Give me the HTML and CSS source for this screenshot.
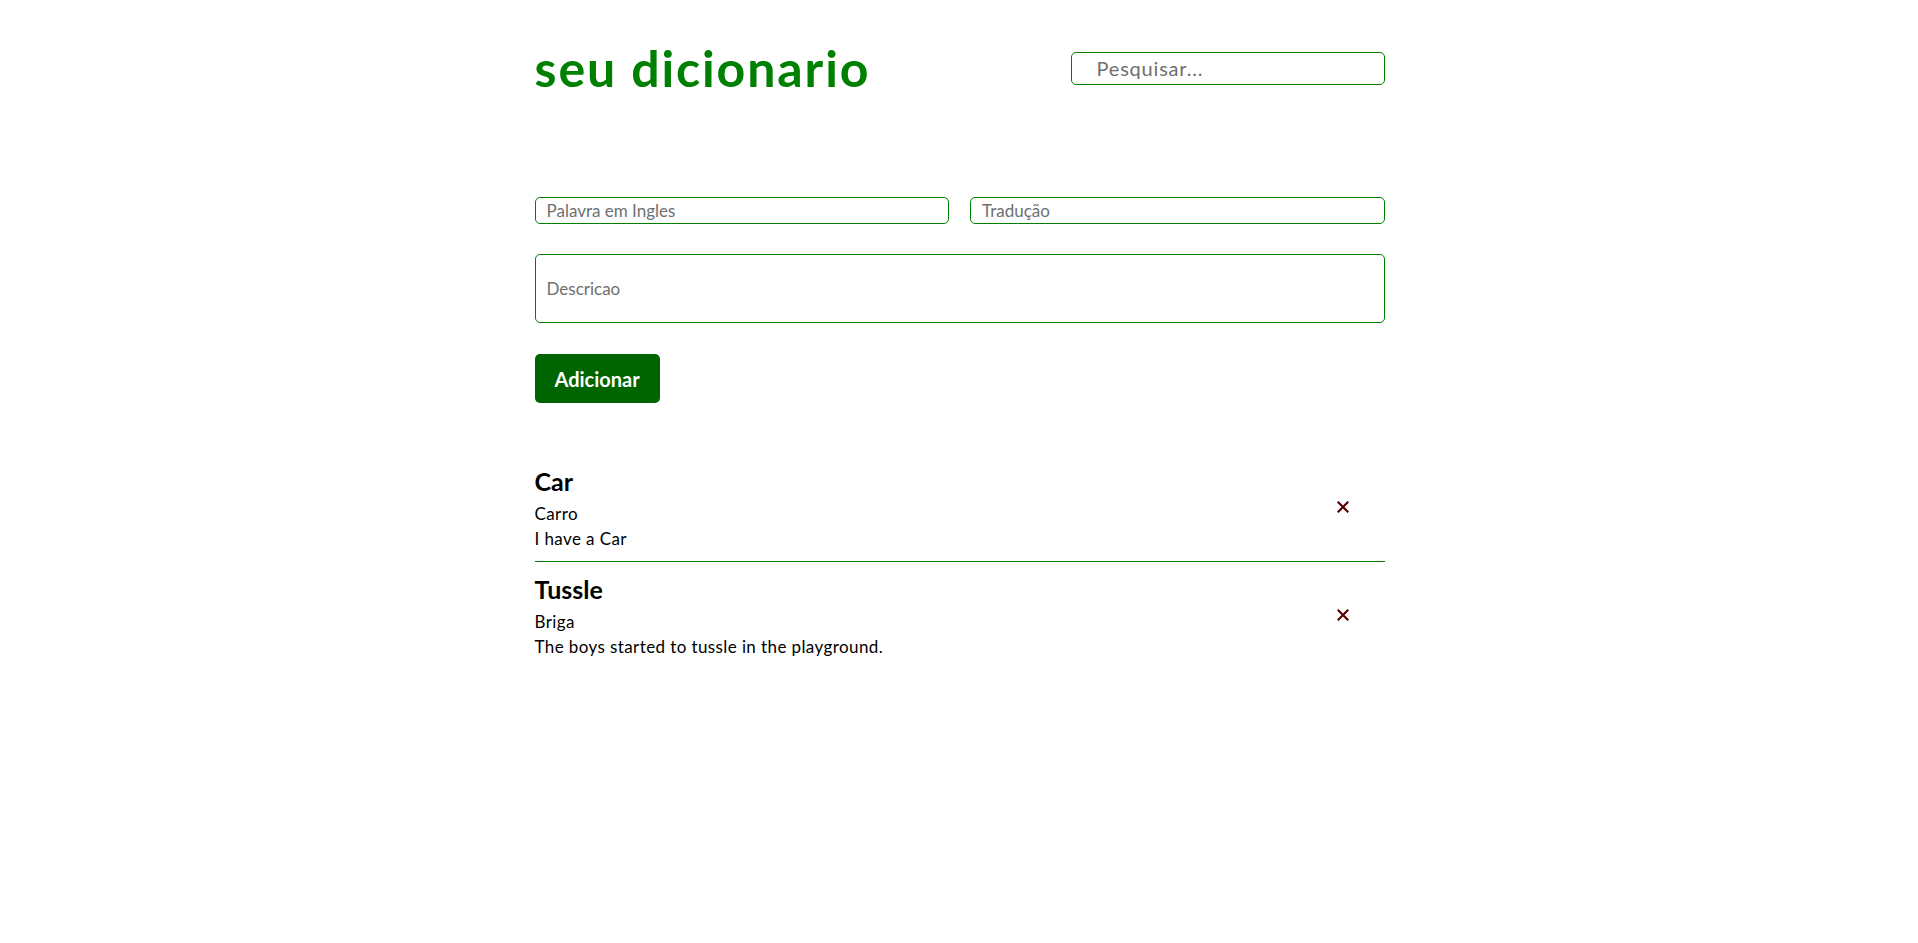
FILE: index.html
```html
<!DOCTYPE html>
<html lang="pt">
<head>
<meta charset="utf-8">
<title>seu dicionario</title>
<link rel="stylesheet" href="styles.css">
</head>
<body>
<div class="container">
  <header class="header">
    <h1 class="title">seu dicionario</h1>
    <input class="search" type="text" placeholder="Pesquisar...">
  </header>

  <form class="form">
    <div class="row">
      <input class="field" type="text" placeholder="Palavra em Ingles">
      <input class="field" type="text" placeholder="Tradução">
    </div>
    <input class="field desc" type="text" placeholder="Descricao">
    <button class="add" type="button">Adicionar</button>
  </form>

  <ul class="list">
    <li class="item">
      <div class="info">
        <h3 class="word">Car</h3>
        <p class="trans">Carro</p>
        <p class="example">I have a Car</p>
      </div>
      <button class="del" type="button" aria-label="remover">
        <svg viewBox="0 0 12 12" width="12" height="12"><path d="M1.5 1.5 L10.5 10.5 M10.5 1.5 L1.5 10.5" stroke="#5a0000" stroke-width="2.2" stroke-linecap="square" fill="none"/></svg>
      </button>
    </li>
    <li class="item">
      <div class="info">
        <h3 class="word">Tussle</h3>
        <p class="trans">Briga</p>
        <p class="example">The boys started to tussle in the playground.</p>
      </div>
      <button class="del" type="button" aria-label="remover">
        <svg viewBox="0 0 12 12" width="12" height="12"><path d="M1.5 1.5 L10.5 10.5 M10.5 1.5 L1.5 10.5" stroke="#5a0000" stroke-width="2.2" stroke-linecap="square" fill="none"/></svg>
      </button>
    </li>
  </ul>
</div>
</body>
</html>
```

FILE: styles.css
```css
* { box-sizing: border-box; }

body {
  margin: 0;
  background: #ffffff;
  font-family: Lato, "Noto Sans", sans-serif;
  color: #000;
}

.container {
  width: 851px;
  margin: 0 auto;
  padding-left: 1px;
}

.header {
  display: flex;
  justify-content: space-between;
  align-items: center;
  padding-top: 45px;
  height: 91px;
}

.title {
  margin: 0;
  font-size: 50px;
  line-height: 46px;
  font-weight: 700;
  color: #008000;
  letter-spacing: 1.9px;
}

.search {
  width: 314px;
  height: 33px;
  border: 1px solid #008000;
  border-radius: 5px;
  padding: 0 0 0 25px;
  font-family: Lato, sans-serif;
  font-size: 20px;
  letter-spacing: 0.8px;
  color: #333;
  outline: none;
}
.search::placeholder { color: #6f6f6f; }

.form {
  display: flex;
  flex-direction: column;
  align-items: flex-start;
  margin-top: 106px;
}

.row {
  display: flex;
  gap: 21px;
  width: 100%;
}

.field {
  flex: 1;
  height: 27px;
  border: 1px solid #008000;
  border-radius: 5px;
  padding: 0 0 0 11px;
  font-family: Lato, sans-serif;
  font-size: 17px;
  color: #333;
  outline: none;
}
.field::placeholder { color: #6f6f6f; }

.desc {
  flex: none;
  width: 100%;
  height: 69px;
  margin-top: 30px;
}

.add {
  margin-top: 31px;
  height: 49px;
  padding: 0 20px;
  background: #006400;
  color: #fff;
  border: none;
  border-radius: 5px;
  font-family: Lato, sans-serif;
  font-weight: 700;
  font-size: 20px;
  cursor: pointer;
}

.list {
  list-style: none;
  margin: 48px 0 0;
  padding: 0;
}

.item {
  display: flex;
  align-items: center;
  justify-content: space-between;
  padding: 16px 0 10px;
}
.item + .item {
  border-top: 1px solid #008000;
  padding-top: 13px;
}

.word {
  margin: 0 0 6px;
  font-size: 25px;
  line-height: 28px;
  font-weight: 700;
}

.trans,
.example {
  margin: 0;
  font-size: 17px;
  line-height: 25px;
  letter-spacing: 0.4px;
}

.del {
  background: none;
  border: none;
  padding: 0;
  margin: 0 36px 5px 0;
  width: 12px;
  height: 12px;
  display: flex;
  cursor: pointer;
}
```
